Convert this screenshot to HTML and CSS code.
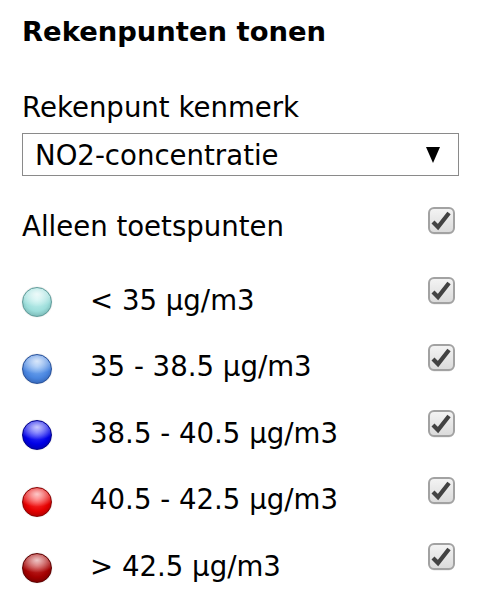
FILE: index.html
```html
<!DOCTYPE html>
<html>
<head>
    <title>Rekenpunten tonen</title>
    <link rel="stylesheet" href="styles.css">
</head>
<body>
    <div class="panel">
        <h2 class="title">Rekenpunten tonen</h2>
        <div class="field-label">Rekenpunt kenmerk</div>
        <div class="select">
            <span>NO2-concentratie</span>
            <svg class="arrow" width="14" height="16" viewBox="0 0 14 16"><polygon points="0,0 14,0 7,16" fill="#000"/></svg>
        </div>

        <div class="row row-first">
            <span class="text first-text">Alleen toetspunten</span>
            <span class="check"></span>
        </div>

        <div class="row">
            <span class="dot dot-1"></span>
            <span class="text">&lt; 35 µg/m3</span>
            <span class="check"></span>
        </div>
        <div class="row">
            <span class="dot dot-2"></span>
            <span class="text">35 - 38.5 µg/m3</span>
            <span class="check"></span>
        </div>
        <div class="row">
            <span class="dot dot-3"></span>
            <span class="text">38.5 - 40.5 µg/m3</span>
            <span class="check"></span>
        </div>
        <div class="row">
            <span class="dot dot-4"></span>
            <span class="text">40.5 - 42.5 µg/m3</span>
            <span class="check"></span>
        </div>
        <div class="row">
            <span class="dot dot-5"></span>
            <span class="text">&gt; 42.5 µg/m3</span>
            <span class="check"></span>
        </div>
    </div>

    <script>
      // fill every checkbox with the same checked icon
      const icon = '<svg width="27" height="29" viewBox="0 0 27 29">' +
        '<rect x="1" y="2.5" width="25" height="25" rx="5" fill="#e4e4e4"/>' +
        '<defs><linearGradient id="cg" x1="0" y1="0" x2="0" y2="1"><stop offset="0" stop-color="#f4f4f4"/><stop offset="1" stop-color="#dadada"/></linearGradient></defs>' +
        '<rect x="1" y="1" width="25" height="25" rx="5" fill="url(#cg)" stroke="#a2a2a2" stroke-width="2"/>' +
        '<polyline points="5,15 10,20 21,6" fill="none" stroke="#424242" stroke-width="4.2"/>' +
        '</svg>';
      document.querySelectorAll('.check').forEach(c => c.innerHTML = icon);
    </script>
</body>
</html>
```

FILE: styles.css
```css
body { margin: 0; background: #fff; color: #000; font-family: "DejaVu Sans", Verdana, sans-serif; font-size: 27.6px; line-height: 32px; }
.panel { padding: 16px 22px 0 22px; }
.title { margin: 0; font-size: 27.4px; line-height: 32px; font-weight: bold; }
.field-label { margin-top: 44px; }
.select { margin-top: 9px; height: 43px; box-sizing: border-box; border: 1px solid #8a8a8a; padding: 6px 18px 0 12px; display: flex; justify-content: space-between; }
.arrow { margin-top: 7px; }
.row { display: flex; align-items: flex-start; height: 66.5px; }
.row-first { margin-top: 31px; height: 70px; }
.text { flex: 1; margin-top: 7.6px; }
.first-text { margin-top: 3.6px; }
.check { width: 27px; height: 29px; margin-right: 4px; }
.check svg { display: block; }
.dot { width: 30px; height: 30px; margin-top: 10px; margin-right: 38px; border-radius: 50%; box-sizing: border-box; border: 1px solid var(--edge); background: radial-gradient(ellipse 70% 45% at 50% 22%, rgba(255,255,255,0.75), rgba(255,255,255,0) 100%), radial-gradient(circle at 50% 40%, var(--light), var(--base) 55%, var(--edge) 100%); box-shadow: 0 0 1px rgba(0,0,0,0.3); }
.dot-1 { --light: #c6f2f0; --base: #9ddedb; --edge: #5f9c9a; }
.dot-2 { --light: #7fb2f4; --base: #4a86e0; --edge: #27509a; }
.dot-3 { --light: #3c3cff; --base: #0000e6; --edge: #00008a; }
.dot-4 { --light: #ff4040; --base: #e40000; --edge: #8a0000; }
.dot-5 { --light: #c83030; --base: #a30000; --edge: #5c0000; }
```
